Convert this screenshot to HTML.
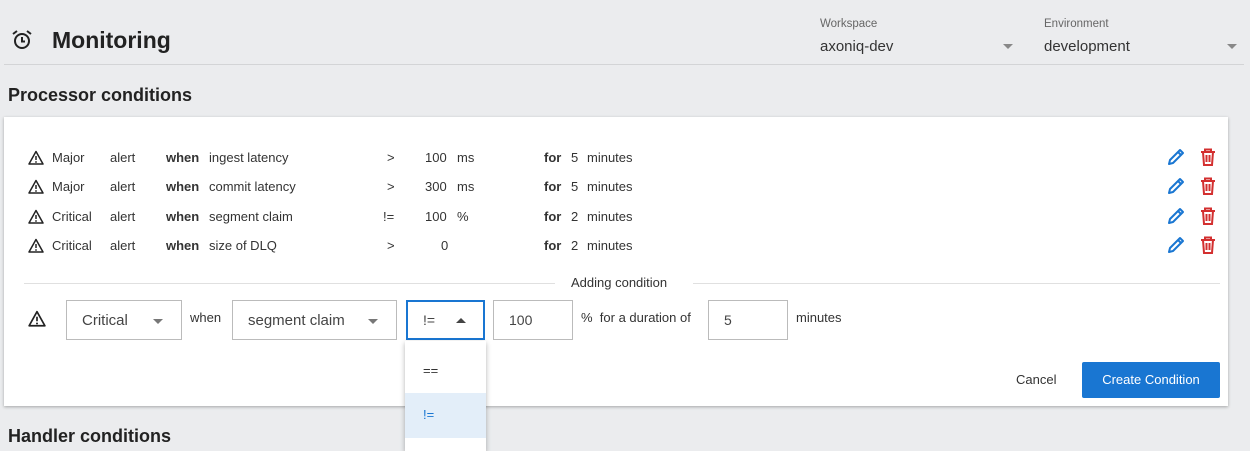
<!DOCTYPE html>
<html><head><style>
*{margin:0;padding:0;box-sizing:border-box}
body{width:1250px;height:445px;background:#ebecee;font-family:"Liberation Sans",sans-serif;color:#222;position:relative;overflow:hidden}
.a{position:absolute;white-space:nowrap}
.r{font-size:13px;color:#333}
.box{position:absolute;border:1px solid #bbb;background:#fff;font-size:15px;color:#444}
.tri{position:absolute;width:0;height:0;border-left:5px solid transparent;border-right:5px solid transparent;border-top:5px solid #777}
</style></head><body>
<svg class="a" style="left:11px;top:29px" width="22" height="22" viewBox="0 0 22 22"><circle cx="11" cy="12" r="7" fill="none" stroke="#222" stroke-width="2"/><path d="M11 8v4.5h3" fill="none" stroke="#222" stroke-width="2"/><path d="M2 5l4-3M20 5l-4-3" stroke="#222" stroke-width="2"/></svg>
<div class="a" style="left:52px;top:27px;font-size:23px;font-weight:bold;color:#222">Monitoring</div>
<div class="a" style="left:820px;top:18px;font-size:11.5px;color:#666">Workspace</div>
<div class="a" style="left:820px;top:38px;font-size:15px;color:#333">axoniq-dev</div>
<div class="tri" style="left:1003px;top:44px;border-top-color:#888"></div>
<div class="a" style="left:1044px;top:18px;font-size:11.5px;color:#666">Environment</div>
<div class="a" style="left:1044px;top:38px;font-size:15px;color:#333">development</div>
<div class="tri" style="left:1227px;top:44px;border-top-color:#888"></div>
<div class="a" style="left:4px;top:64px;width:1240px;height:1px;background:#d3d4d6"></div>
<div class="a" style="left:8px;top:85px;font-size:18px;font-weight:bold;color:#222">Processor conditions</div>

<div class="a" style="left:4px;top:117px;width:1224px;height:289px;background:#fff;box-shadow:0 1px 3px rgba(0,0,0,.3)"></div>

<svg width="0" height="0" style="position:absolute"><defs><symbol id="w" viewBox="0 0 16 16"><path d="M8 1.5L15 14H1Z" fill="none" stroke="#222" stroke-width="1.5" stroke-linejoin="round"/><path d="M8 6v4" stroke="#222" stroke-width="1.5"/><circle cx="8" cy="12" r=".9" fill="#222"/></symbol>
<symbol id="p" viewBox="0 0 20 20"><path d="M3 17l1-4L14 3l3 3L7 16z M12 5l3 3" fill="none" stroke="#1976d2" stroke-width="2" stroke-linejoin="round"/></symbol>
<symbol id="t" viewBox="0 0 20 20"><path d="M3 5h14M7 5V2.5h6V5M5 5l1 13h8l1-13M8.5 8v7M11.5 8v7" fill="none" stroke="#d32f2f" stroke-width="2"/></symbol></defs></svg>

<div class="a r" style="top:150px;left:0">
<svg class="a" style="left:28px;top:0" width="16" height="16"><use href="#w"/></svg>
<span class="a" style="left:52px">Major</span><span class="a" style="left:110px">alert</span><b class="a" style="left:166px">when</b><span class="a" style="left:209px">ingest latency</span><span class="a" style="left:387px">&gt;</span><span class="a" style="left:425px">100</span><span class="a" style="left:457px">ms</span><b class="a" style="left:544px">for</b><span class="a" style="left:571px">5</span><span class="a" style="left:587px">minutes</span>
<svg class="a" style="left:1166px;top:-3px" width="20" height="20"><use href="#p"/></svg><svg class="a" style="left:1198px;top:-4px" width="20" height="22"><use href="#t"/></svg></div>
<div class="a r" style="top:179px;left:0">
<svg class="a" style="left:28px;top:0" width="16" height="16"><use href="#w"/></svg>
<span class="a" style="left:52px">Major</span><span class="a" style="left:110px">alert</span><b class="a" style="left:166px">when</b><span class="a" style="left:209px">commit latency</span><span class="a" style="left:387px">&gt;</span><span class="a" style="left:425px">300</span><span class="a" style="left:457px">ms</span><b class="a" style="left:544px">for</b><span class="a" style="left:571px">5</span><span class="a" style="left:587px">minutes</span>
<svg class="a" style="left:1166px;top:-3px" width="20" height="20"><use href="#p"/></svg><svg class="a" style="left:1198px;top:-4px" width="20" height="22"><use href="#t"/></svg></div>
<div class="a r" style="top:209px;left:0">
<svg class="a" style="left:28px;top:0" width="16" height="16"><use href="#w"/></svg>
<span class="a" style="left:52px">Critical</span><span class="a" style="left:110px">alert</span><b class="a" style="left:166px">when</b><span class="a" style="left:209px">segment claim</span><span class="a" style="left:383px">!=</span><span class="a" style="left:425px">100</span><span class="a" style="left:457px">%</span><b class="a" style="left:544px">for</b><span class="a" style="left:571px">2</span><span class="a" style="left:587px">minutes</span>
<svg class="a" style="left:1166px;top:-3px" width="20" height="20"><use href="#p"/></svg><svg class="a" style="left:1198px;top:-4px" width="20" height="22"><use href="#t"/></svg></div>
<div class="a r" style="top:238px;left:0">
<svg class="a" style="left:28px;top:0" width="16" height="16"><use href="#w"/></svg>
<span class="a" style="left:52px">Critical</span><span class="a" style="left:110px">alert</span><b class="a" style="left:166px">when</b><span class="a" style="left:209px">size of DLQ</span><span class="a" style="left:387px">&gt;</span><span class="a" style="left:441px">0</span><b class="a" style="left:544px">for</b><span class="a" style="left:571px">2</span><span class="a" style="left:587px">minutes</span>
<svg class="a" style="left:1166px;top:-3px" width="20" height="20"><use href="#p"/></svg><svg class="a" style="left:1198px;top:-4px" width="20" height="22"><use href="#t"/></svg></div>

<div class="a" style="left:24px;top:283px;width:531px;height:1px;background:#e0e0e0"></div>
<div class="a r" style="left:571px;top:275px">Adding condition</div>
<div class="a" style="left:693px;top:283px;width:527px;height:1px;background:#e0e0e0"></div>

<svg class="a" style="left:28px;top:310px" width="18" height="18"><use href="#w"/></svg>
<div class="box" style="left:66px;top:300px;width:116px;height:40px"><span class="a" style="left:15px;top:11px">Critical</span><div class="tri" style="left:86px;top:18px"></div></div>
<div class="a r" style="left:190px;top:310px">when</div>
<div class="box" style="left:232px;top:300px;width:165px;height:40px"><span class="a" style="left:15px;top:11px">segment claim</span><div class="tri" style="left:135px;top:18px"></div></div>
<div class="box" style="left:406px;top:300px;width:79px;height:40px;border:2px solid #1976d2"><span class="a" style="left:15px;top:10px;font-size:14px">!=</span><div class="tri" style="left:48px;top:16px;border-top:0;border-bottom:5px solid #444"></div></div>
<div class="box" style="left:493px;top:300px;width:80px;height:40px"><span class="a" style="left:15px;top:11px;font-size:14px">100</span></div>
<div class="a r" style="left:581px;top:310px">%&nbsp; for a duration of</div>
<div class="box" style="left:708px;top:300px;width:80px;height:40px"><span class="a" style="left:15px;top:11px;font-size:14px">5</span></div>
<div class="a r" style="left:796px;top:310px">minutes</div>

<div class="a r" style="left:1016px;top:372px">Cancel</div>
<div class="a" style="left:1082px;top:362px;width:138px;height:36px;background:#1976d2;border-radius:2px;color:#fff;font-size:13px;text-align:center;line-height:36px">Create Condition</div>

<div class="a" style="left:8px;top:426px;font-size:18px;font-weight:bold;color:#222">Handler conditions</div>

<div class="a" style="left:405px;top:341px;width:81px;height:110px;background:#fff;box-shadow:0 2px 5px rgba(0,0,0,.3)">
<div class="a" style="left:18px;top:22px;font-size:13px;color:#333">==</div>
<div class="a" style="left:0;top:52px;width:81px;height:45px;background:#e3eef9"></div>
<div class="a" style="left:18px;top:66px;font-size:13px;color:#1976d2">!=</div>
</div>
</body></html>
